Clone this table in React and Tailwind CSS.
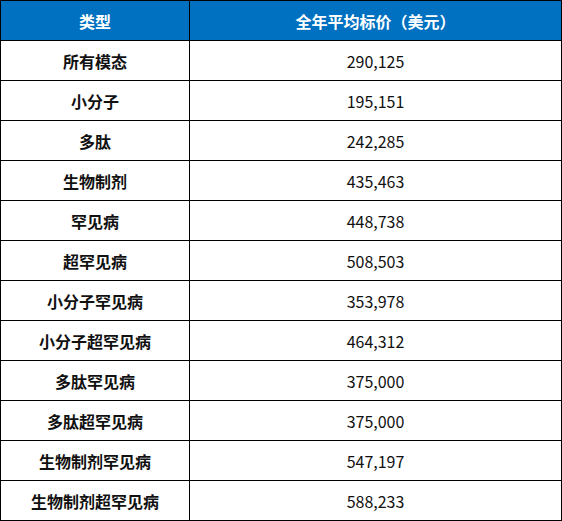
import React from "react";

const rows = [
  ["所有模态", "290,125"],
  ["小分子", "195,151"],
  ["多肽", "242,285"],
  ["生物制剂", "435,463"],
  ["罕见病", "448,738"],
  ["超罕见病", "508,503"],
  ["小分子罕见病", "353,978"],
  ["小分子超罕见病", "464,312"],
  ["多肽罕见病", "375,000"],
  ["多肽超罕见病", "375,000"],
  ["生物制剂罕见病", "547,197"],
  ["生物制剂超罕见病", "588,233"],
];

export default function App() {
  return (
    <div
      className="w-[562px] bg-white border-l border-r border-t border-black text-[16px] text-[#111]"
      style={{ fontFamily: '"Noto Sans CJK SC", "Noto Sans", sans-serif' }}
    >
      <div className="flex h-10 border-b border-black bg-[#0070C0] text-white font-bold">
        <div className="w-[189px] shrink-0 border-r border-black flex items-center justify-center">类型</div>
        <div className="flex-1 flex items-center justify-center">全年平均标价（美元）</div>
      </div>
      {rows.map(([a, b]) => (
        <div key={a} className="flex h-10 border-b border-black">
          <div className="w-[189px] shrink-0 border-r border-black flex items-center justify-center font-bold">{a}</div>
          <div className="flex-1 flex items-center justify-center">{b}</div>
        </div>
      ))}
    </div>
  );
}
